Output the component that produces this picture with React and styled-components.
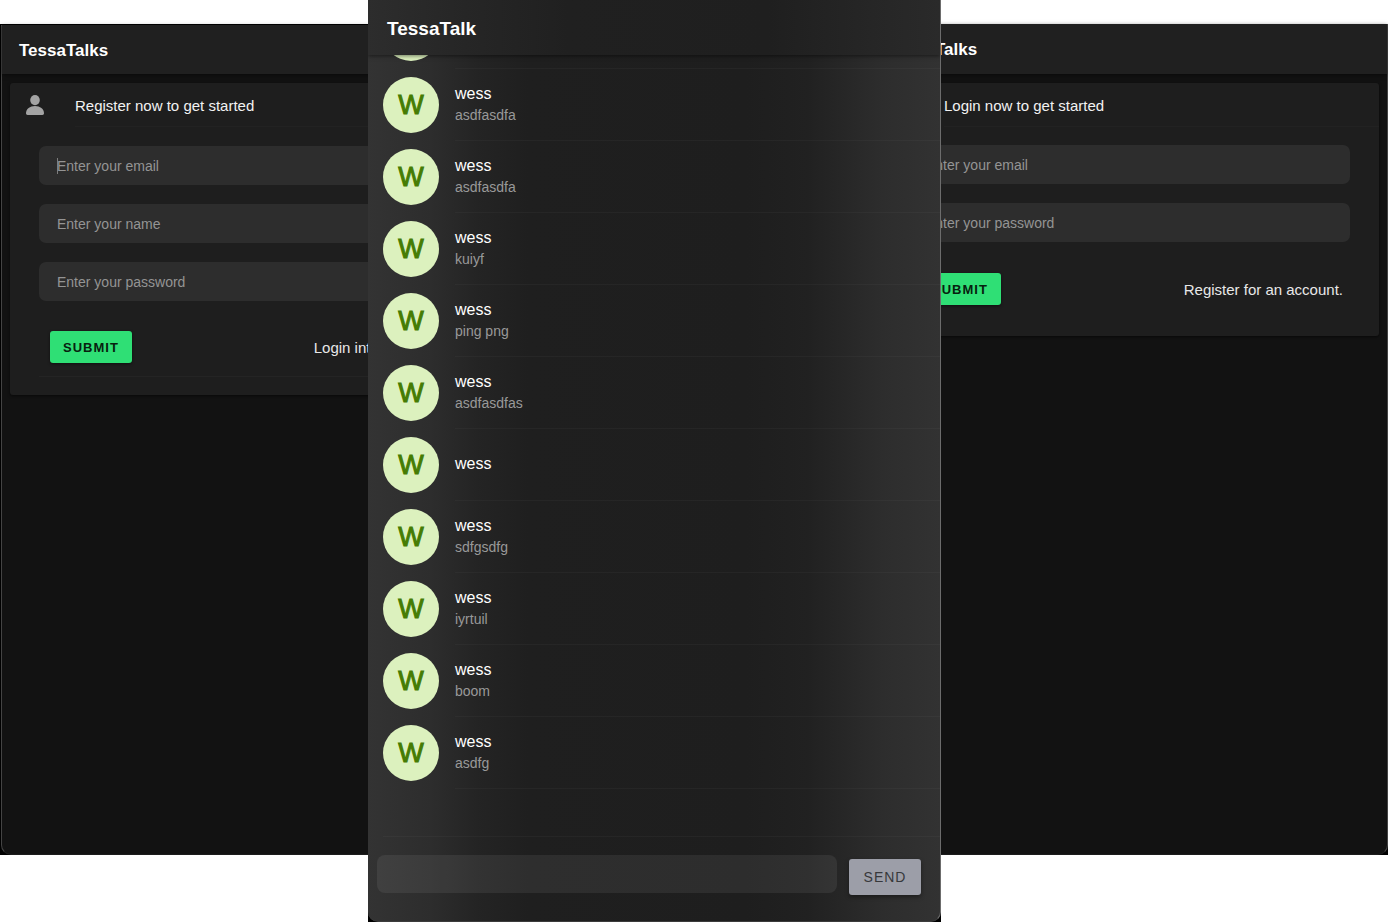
import React from "react";
import styled, { createGlobalStyle } from "styled-components";

const GlobalStyle = createGlobalStyle`
  *, *::before, *::after { box-sizing: border-box; }
  body {
    margin: 0;
    background: #fff;
    color: #fff;
    font-family: "Liberation Sans", Helvetica, Arial, sans-serif;
  }
  button, input { font-family: inherit; }
`;

const Desktop = styled.main`
  display: flex;
  min-height: 100vh;
`;

const SideFrame = styled.section`
  flex: 518 1 518px;
  min-width: 0;
  display: flex;
  margin: 24px 0 67px;
  padding-left: ${(p) => (p.$edge === "left" ? 1 : 0)}px;
  padding-top: ${(p) => (p.$edge === "left" ? 1 : 0)}px;
  background: #000;
`;

const SideWindow = styled.div`
  flex: 1;
  min-width: 0;
  background: #121212;
  border: 1px solid #444;
  border-top: 0;
  border-bottom-color: #1c1c1c;
  border-radius: 0 0 10px 10px;
`;

const SideHeader = styled.header`
  display: flex;
  align-items: center;
  height: ${(p) => (p.$tall ? 50 : 49)}px;
  padding: 2px 17px 0;
  background: #202020;
  box-shadow: 0 1px 4px rgba(0, 0, 0, 0.5);
`;

const SideTitle = styled.h1`
  margin: 0;
  font-size: 17px;
  line-height: 24px;
  font-weight: 700;
`;

const Card = styled.form`
  margin: 9px 8px;
  padding-bottom: ${(p) => (p.$divided ? 18 : 31)}px;
  background: #1e1e1e;
  border-radius: 3px;
  box-shadow: 0 1px 3px rgba(0, 0, 0, 0.6);
`;

const CardHeader = styled.div`
  display: flex;
  align-items: center;
  gap: 31px;
  height: 44px;
  padding-left: 16px;
  color: #a3a3a3;
`;

const CardTitle = styled.h2`
  flex: 1;
  align-self: stretch;
  margin: 0;
  border-bottom: 1px solid #222;
  color: #f2f2f2;
  font-size: 15px;
  line-height: 45px;
  font-weight: 400;
`;

const Fields = styled.div`
  display: flex;
  flex-direction: column;
  gap: 19px;
  padding: ${(p) => (p.$divided ? 19 : 18)}px 29px 0;
`;

const TextField = styled.input`
  width: 100%;
  height: 39px;
  padding: 0 18px;
  border: 0;
  border-radius: 7px;
  outline: 0;
  color: #fff;
  font-size: 14px;
  background: #2d2d2d
    ${(p) =>
      p.$caret
        ? "linear-gradient(#7c7c7c, #7c7c7c) 18px center / 1px 16px no-repeat"
        : ""};
  &::placeholder { color: #949494; opacity: 1; }
`;

const Actions = styled.div`
  display: flex;
  align-items: center;
  justify-content: space-between;
  margin: ${(p) => (p.$divided ? 30 : 31)}px 0 0 29px;
  padding: 0 36px ${(p) => (p.$divided ? 13 : 0)}px 11px;
  border-bottom: ${(p) => (p.$divided ? "1px solid #242424" : "0")};
`;

const SubmitButton = styled.button`
  height: 32px;
  padding: 0 13px;
  border: 0;
  border-radius: 3px;
  background: #2fdf75;
  color: #07210f;
  font-size: 13px;
  font-weight: 700;
  letter-spacing: 1px;
  box-shadow: 0 1px 3px rgba(0, 0, 0, 0.5);
`;

const SwitchLink = styled.a`
  padding-top: 2px;
  color: #e8e8e8;
  font-size: 15px;
  line-height: 20px;
  text-decoration: none;
  white-space: nowrap;
`;

const ChatFrame = styled.section`
  position: relative;
  z-index: 1;
  flex: 573 1 573px;
  min-width: 0;
  height: 100vh;
  margin: 0 -71px 0 -150px;
  background: #000;
`;

const ChatWindow = styled.div`
  display: flex;
  flex-direction: column;
  height: 100%;
  border-right: 1px solid #6c6c6c;
  border-bottom: 1px solid #3c3c3c;
  border-radius: 0 0 10px 10px;
  overflow: hidden;
  background: linear-gradient(
    90deg,
    #333 0%,
    #2d2d2d 11%,
    #242424 19%,
    #1f1f1f 28%,
    #1e1e1e 66%,
    #212121 77%,
    #2d2d2d 90%,
    #323232 100%
  );
`;

const ChatHeader = styled.header`
  position: relative;
  z-index: 1;
  display: flex;
  align-items: center;
  flex: none;
  height: 55px;
  padding: 2px 19px 0;
  background: linear-gradient(
    90deg,
    #2d2d2d 0%,
    #262626 17%,
    #202020 35%,
    #1f1f1f 70%,
    #262626 88%,
    #2a2a2a 100%
  );
  box-shadow: 0 1px 4px rgba(0, 0, 0, 0.5);
`;

const ChatTitle = styled.h1`
  margin: 0;
  font-size: 19px;
  line-height: 24px;
  font-weight: 700;
`;

const MessageList = styled.ul`
  display: flex;
  flex: 1;
  flex-direction: column;
  justify-content: flex-end;
  min-height: 0;
  margin: 0;
  padding: 0;
  overflow: hidden;
  list-style: none;
`;

const MessageRow = styled.li`
  display: flex;
  align-items: center;
  flex: none;
  gap: 16px;
  height: 72px;
  padding-left: 15px;
`;

const Avatar = styled.span`
  display: flex;
  align-items: center;
  justify-content: center;
  flex: none;
  width: 56px;
  height: 56px;
  border-radius: 50%;
  background: #dcf1be;
  color: #457c03;
  font-size: 27px;
  line-height: 32px;
  -webkit-text-stroke: 1px #457c03;
`;

const MessageBody = styled.div`
  display: flex;
  flex: 1;
  flex-direction: column;
  justify-content: center;
  min-width: 0;
  height: 72px;
  padding-bottom: 1px;
  border-bottom: 1px solid rgba(255, 255, 255, 0.03);
`;

const Author = styled.strong`
  font-size: 16px;
  line-height: 22px;
  font-weight: 400;
`;

const MessageText = styled.span`
  color: #999;
  font-size: 14px;
  line-height: 20px;
`;

const ListEnd = styled.li`
  flex: none;
  height: 48px;
  margin-left: 15px;
  border-bottom: 1px solid rgba(255, 255, 255, 0.03);
`;

const Composer = styled.form`
  display: flex;
  flex: none;
  gap: 12px;
  height: 84px;
  padding: 18px 19px 0 9px;
`;

const ComposerInput = styled.input`
  flex: 1;
  min-width: 0;
  height: 38px;
  padding: 0 16px;
  border: 0;
  border-radius: 8px;
  outline: 0;
  background: rgba(255, 255, 255, 0.07);
  color: #fff;
  font-size: 16px;
`;

const SendButton = styled.button`
  width: 72px;
  height: 36px;
  margin-top: 4px;
  padding: 0;
  border: 0;
  border-radius: 3px;
  background: #9c9ea8;
  color: #37383b;
  font-size: 14px;
  letter-spacing: 1px;
  box-shadow: 0 2px 4px rgba(0, 0, 0, 0.4);
`;

const messages = [
  "asdfasdfa",
  "asdfasdfa",
  "kuiyf",
  "ping png",
  "asdfasdfas",
  "",
  "sdfgsdfg",
  "iyrtuil",
  "boom",
  "asdfg",
];

function PersonIcon() {
  return (
    <svg width="18" height="20" viewBox="0 0 18 20" fill="currentColor" aria-hidden="true">
      <ellipse cx="9" cy="5.1" rx="4.8" ry="5.1" />
      <path d="M0 18.3C0 14.1 4 11.1 9 11.1s9 3 9 7.2c0 1-.6 1.7-1.6 1.7H1.6C.6 20 0 19.3 0 18.3z" />
    </svg>
  );
}

function AccountWindow({ edge, heading, fields, linkText, divided, caret }) {
  return (
    <SideFrame $edge={edge}>
      <SideWindow>
        <SideHeader $tall={edge === "right"}>
          <SideTitle>TessaTalks</SideTitle>
        </SideHeader>
        <Card $divided={divided}>
          <CardHeader>
            <PersonIcon />
            <CardTitle>{heading}</CardTitle>
          </CardHeader>
          <Fields $divided={divided}>
            {fields.map((name, i) => (
              <TextField
                key={name}
                type={name === "name" ? "text" : name}
                aria-label={name}
                placeholder={`Enter your ${name}`}
                $caret={caret && i === 0}
              />
            ))}
          </Fields>
          <Actions $divided={divided}>
            <SubmitButton type="button">SUBMIT</SubmitButton>
            <SwitchLink href="#">{linkText}</SwitchLink>
          </Actions>
        </Card>
      </SideWindow>
    </SideFrame>
  );
}

function Chat() {
  return (
    <ChatFrame>
      <ChatWindow>
        <ChatHeader>
          <ChatTitle>TessaTalk</ChatTitle>
        </ChatHeader>
        <MessageList>
          <MessageRow aria-hidden="true">
            <Avatar />
            <MessageBody />
          </MessageRow>
          {messages.map((text, i) => (
            <MessageRow key={i}>
              <Avatar>W</Avatar>
              <MessageBody>
                <Author>wess</Author>
                {text && <MessageText>{text}</MessageText>}
              </MessageBody>
            </MessageRow>
          ))}
          <ListEnd />
        </MessageList>
        <Composer>
          <ComposerInput type="text" aria-label="Message" />
          <SendButton type="button">SEND</SendButton>
        </Composer>
      </ChatWindow>
    </ChatFrame>
  );
}

export default function App() {
  return (
    <>
      <GlobalStyle />
      <Desktop>
        <AccountWindow
          edge="left"
          heading="Register now to get started"
          fields={["email", "name", "password"]}
          linkText="Login into your account."
          divided
          caret
        />
        <Chat />
        <AccountWindow
          edge="right"
          heading="Login now to get started"
          fields={["email", "password"]}
          linkText="Register for an account."
        />
      </Desktop>
    </>
  );
}
